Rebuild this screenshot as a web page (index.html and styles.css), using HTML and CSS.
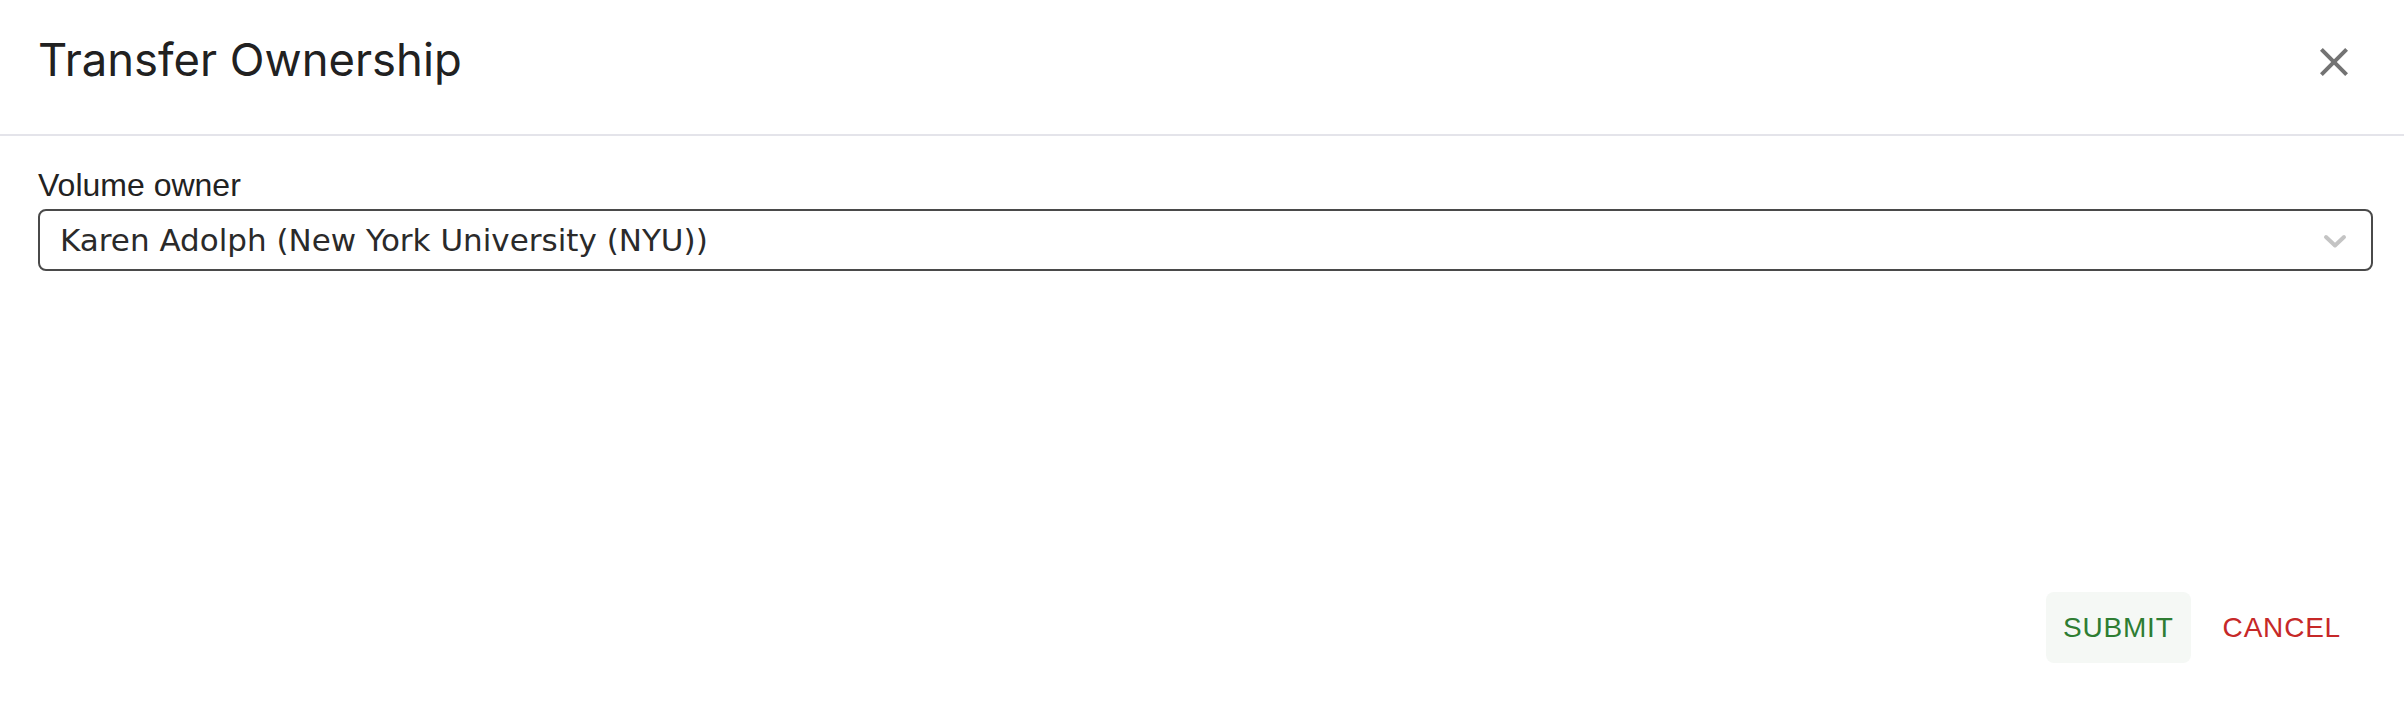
FILE: index.html
```html
<!DOCTYPE html>
<html lang="en">
<head>
<meta charset="utf-8">
<title>Transfer Ownership</title>
<link rel="stylesheet" href="styles.css">
</head>
<body>
<div class="dialog">
  <header class="dialog-header">
    <h2 class="dialog-title">Transfer Ownership</h2>
    <button class="close-btn" aria-label="Close">
      <svg viewBox="0 0 24 24" width="48" height="48"><path d="M19 6.41 17.59 5 12 10.59 6.41 5 5 6.41 10.59 12 5 17.59 6.41 19 12 13.41 17.59 19 19 17.59 13.41 12z" fill="currentColor"/></svg>
    </button>
  </header>
  <main class="dialog-content">
    <label class="field-label">Volume owner</label>
    <div class="select">
      <span class="select-value">Karen Adolph (New York University (NYU))</span>
      <svg class="chevron" viewBox="0 0 24 15" width="24" height="15"><polyline points="3,3 12,11.5 21,3" fill="none" stroke="currentColor" stroke-width="4" stroke-linecap="round" stroke-linejoin="round"/></svg>
    </div>
  </main>
  <footer class="dialog-actions">
    <button class="btn btn-submit">Submit</button>
    <button class="btn btn-cancel">Cancel</button>
  </footer>
</div>
</body>
</html>
```
FILE: styles.css
```css
html, body {
  margin: 0;
  padding: 0;
  background: #ffffff;
}

.dialog {
  width: 2404px;
  height: 706px;
  display: flex;
  flex-direction: column;
  box-sizing: border-box;
  overflow: hidden;
}

.dialog-header {
  display: flex;
  justify-content: space-between;
  align-items: flex-start;
  height: 136px;
  padding: 37px 46px 0 38px;
  border-bottom: 2px solid #e4e4ea;
  box-sizing: border-box;
}

.dialog-title {
  margin: 0;
  font-family: "Inter", "Liberation Sans", sans-serif;
  font-weight: 400;
  font-size: 45.4px;
  line-height: 45px;
  color: #212121;
}

.close-btn {
  margin: 1px 0 0 0;
  padding: 0;
  border: 0;
  background: none;
  color: #737373;
  width: 48px;
  height: 48px;
  display: flex;
}

.dialog-content {
  flex: 1;
  padding: 33px 31px 0 38px;
  display: flex;
  flex-direction: column;
}

.field-label {
  font-family: "Liberation Sans", Arial, sans-serif;
  font-size: 32px;
  line-height: 32px;
  color: #222222;
}

.select {
  margin-top: 8px;
  height: 62px;
  box-sizing: border-box;
  border: 2px solid #4a4a4a;
  border-radius: 8px;
  display: flex;
  align-items: center;
  justify-content: space-between;
  padding: 0 24px 0 20px;
}

.select-value {
  font-family: "DejaVu Sans", Verdana, sans-serif;
  font-size: 31px;
  line-height: 1;
  color: #2a2a2a;
}

.chevron {
  color: #c4c4c4;
  margin-top: 2px;
}

.dialog-actions {
  display: flex;
  justify-content: flex-end;
  gap: 15px;
  padding: 0 46px 43px 0;
}

.btn {
  font-family: "Liberation Sans", Arial, sans-serif;
  font-size: 28px;
  letter-spacing: 0.8px;
  line-height: 49px;
  text-transform: uppercase;
  padding: 11px 17px;
  border: 0;
  border-radius: 8px;
  background: none;
}

.btn-submit {
  background: #f5f8f5;
  color: #2e7d32;
}

.btn-cancel {
  color: #c62828;
}
```
